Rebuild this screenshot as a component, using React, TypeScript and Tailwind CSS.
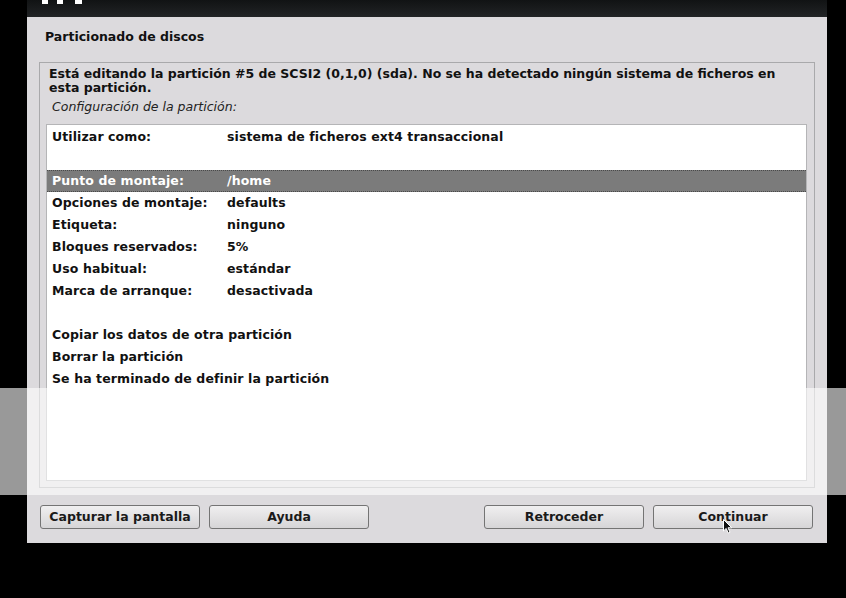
const ROWS: { label: string; value?: string; selected?: boolean }[] = [
  { label: 'Utilizar como:', value: 'sistema de ficheros ext4 transaccional' },
  { label: '' },
  { label: 'Punto de montaje:', value: '/home', selected: true },
  { label: 'Opciones de montaje:', value: 'defaults' },
  { label: 'Etiqueta:', value: 'ninguno' },
  { label: 'Bloques reservados:', value: '5%' },
  { label: 'Uso habitual:', value: 'estándar' },
  { label: 'Marca de arranque:', value: 'desactivada' },
  { label: '' },
  { label: 'Copiar los datos de otra partición' },
  { label: 'Borrar la partición' },
  { label: 'Se ha terminado de definir la partición' },
];

function Button({ label }: { label: string }) {
  return (
    <button className="h-[24px] w-[160px] rounded-[3px] border border-[#747474] bg-gradient-to-b from-[#f0eff0] to-[#d6d5d7] pt-[1px] text-[12.5px] font-bold text-[#1a1a1a]">
      {label}
    </button>
  );
}

export default function App() {
  return (
    <div className="relative h-[598px] w-[846px] overflow-hidden bg-black font-['DejaVu_Sans',sans-serif]">
      <div className="ml-[27px] flex h-[543px] w-[800px] flex-col">
        {/* Header bar with cut-off logo */}
        <div className="relative h-[17px] bg-gradient-to-b from-[#111314] to-[#222426]">
          <div className="absolute left-[15px] top-0 h-[4px] w-[6px] bg-white" />
          <div className="absolute left-[30px] top-0 h-[4px] w-[6px] bg-white" />
          <div className="absolute left-[48px] top-0 h-[4px] w-[7px] bg-white" />
        </div>

        {/* Dialog body */}
        <div className="flex flex-1 flex-col bg-[#dcdadd] px-[12px]">
          <h1 className="pl-[6px] pt-[12px] text-[12.5px] font-bold leading-[16px] text-[#111]">
            Particionado de discos
          </h1>

          <div className="mt-[17px] flex h-[426px] flex-col border border-[#a9a9ab] pl-[9px] pr-[7px] pt-[4px]">
            <p className="pr-[20px] text-[12.5px] font-bold leading-[14px] text-[#111]">
              Está editando la partición #5 de SCSI2 (0,1,0) (sda). No se ha detectado ningún sistema de ficheros en
              esta partición.
            </p>
            <p className="mt-[5px] pl-[3px] text-[12.5px] italic leading-[14px] text-[#222]">
              Configuración de la partición:
            </p>

            <div className="-ml-[3px] mt-[10px] h-[357px] border border-[#b5b5b7] bg-white pt-[1px]">
              {ROWS.map((r, i) => (
                <div
                  key={i}
                  className={
                    r.selected
                      ? 'flex h-[22px] items-center border-y border-dotted border-[#4a4a4a] bg-[#7b7b7b] pl-[5px] text-[12.5px] font-bold tracking-[0.1px] text-white'
                      : 'flex h-[22px] items-center pl-[5px] text-[12.5px] font-bold tracking-[0.1px] text-[#111]'
                  }
                >
                  <span className={r.value ? 'w-[175px] shrink-0' : ''}>{r.label}</span>
                  {r.value && <span>{r.value}</span>}
                </div>
              ))}
            </div>
          </div>

          <div className="flex items-center pl-[1px] pr-[2px] pt-[17px]">
            <div className="flex gap-[9px]">
              <Button label="Capturar la pantalla" />
              <Button label="Ayuda" />
            </div>
            <div className="ml-auto flex gap-[9px]">
              <Button label="Retroceder" />
              <Button label="Continuar" />
            </div>
          </div>
        </div>
      </div>

      {/* Translucent band across the capture */}
      <div className="pointer-events-none absolute left-0 top-[388px] h-[107px] w-full bg-white/60" />

      {/* Mouse pointer */}
      <svg className="absolute left-[723px] top-[519px]" width="10" height="16" viewBox="0 0 10 16">
        <path d="M0.5 0.5 L0.5 12 L3.2 9.4 L5.2 14 L7 13.2 L5 8.8 L8.8 8.8 Z" fill="#111" stroke="#fff" strokeWidth="1" />
      </svg>
    </div>
  );
}
